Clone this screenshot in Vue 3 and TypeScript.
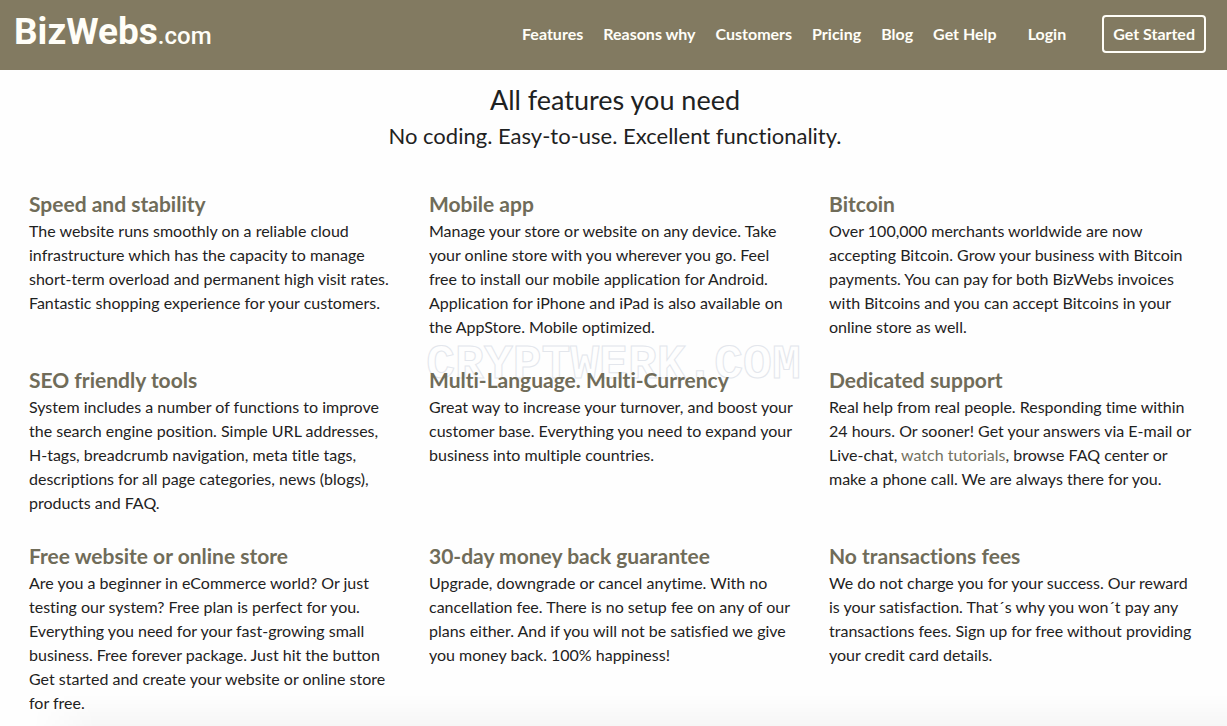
<script setup lang="ts">
interface NavItem {
  label: string
  href: string
}

interface Feature {
  title: string
  text: string
  link?: string
  after?: string
}

const navItems: NavItem[] = [
  { label: 'Features', href: '#features' },
  { label: 'Reasons why', href: '#reasons' },
  { label: 'Customers', href: '#customers' },
  { label: 'Pricing', href: '#pricing' },
  { label: 'Blog', href: '#blog' },
  { label: 'Get Help', href: '#help' },
]

const features: Feature[] = [
  {
    title: 'Speed and stability',
    text: 'The website runs smoothly on a reliable cloud\ninfrastructure which has the capacity to manage\nshort-term overload and permanent high visit rates.\nFantastic shopping experience for your customers.',
  },
  {
    title: 'Mobile app',
    text: 'Manage your store or website on any device. Take\nyour online store with you wherever you go. Feel\nfree to install our mobile application for Android.\nApplication for iPhone and iPad is also available on\nthe AppStore. Mobile optimized.',
  },
  {
    title: 'Bitcoin',
    text: 'Over 100,000 merchants worldwide are now\naccepting Bitcoin. Grow your business with Bitcoin\npayments. You can pay for both BizWebs invoices\nwith Bitcoins and you can accept Bitcoins in your\nonline store as well.',
  },
  {
    title: 'SEO friendly tools',
    text: 'System includes a number of functions to improve\nthe search engine position. Simple URL addresses,\nH-tags, breadcrumb navigation, meta title tags,\ndescriptions for all page categories, news (blogs),\nproducts and FAQ.',
  },
  {
    title: 'Multi-Language. Multi-Currency',
    text: 'Great way to increase your turnover, and boost your\ncustomer base. Everything you need to expand your\nbusiness into multiple countries.',
  },
  {
    title: 'Dedicated support',
    text: 'Real help from real people. Responding time within\n24 hours. Or sooner! Get your answers via E-mail or\nLive-chat, ',
    link: 'watch tutorials',
    after: ', browse FAQ center or\nmake a phone call. We are always there for you.',
  },
  {
    title: 'Free website or online store',
    text: 'Are you a beginner in eCommerce world? Or just\ntesting our system? Free plan is perfect for you.\nEverything you need for your fast-growing small\nbusiness. Free forever package. Just hit the button\nGet started and create your website or online store\nfor free.',
  },
  {
    title: '30-day money back guarantee',
    text: 'Upgrade, downgrade or cancel anytime. With no\ncancellation fee. There is no setup fee on any of our\nplans either. And if you will not be satisfied we give\nyou money back. 100% happiness!',
  },
  {
    title: 'No transactions fees',
    text: 'We do not charge you for your success. Our reward\nis your satisfaction. That´s why you won´t pay any\ntransactions fees. Sign up for free without providing\nyour credit card details.',
  },
]
</script>

<template>
  <div class="page">
    <header class="header">
      <a class="logo" href="#">BizWebs<span class="logo-tld">.com</span></a>
      <nav class="nav">
        <a v-for="item in navItems" :key="item.label" :href="item.href">{{ item.label }}</a>
        <a class="login" href="#login">Login</a>
        <button class="cta" type="button">Get Started</button>
      </nav>
    </header>

    <div class="watermark" aria-hidden="true">CRYPTWERK.COM</div>

    <main class="main">
      <h1>All features you need</h1>
      <p class="subtitle">No coding. Easy-to-use. Excellent functionality.</p>
      <div class="grid">
        <section v-for="f in features" :key="f.title" class="feature">
          <h2>{{ f.title }}</h2>
          <p>{{ f.text }}<a v-if="f.link" href="#tutorials">{{ f.link }}</a>{{ f.after }}</p>
        </section>
      </div>
    </main>

    <div class="shade"></div>
  </div>
</template>

<style>
body {
  margin: 0;
  background: #fefefe;
}
</style>

<style scoped>
.page {
  position: relative;
  min-height: 100vh;
  overflow: hidden;
  box-sizing: border-box;
  font-family: Lato, "Noto Sans", sans-serif;
  font-variant-ligatures: none;
  color: #1e2222;
}

.header {
  display: flex;
  align-items: center;
  justify-content: space-between;
  height: 70px;
  padding: 0 21px 3px 14px;
  box-sizing: border-box;
  background: #827a61;
}

.logo {
  font-family: Roboto, sans-serif;
  font-size: 37px;
  line-height: 48px;
  font-weight: 700;
  color: #fffef8;
  text-decoration: none;
}

.logo-tld {
  font-size: 24px;
  font-weight: 500;
}

.nav {
  display: flex;
  align-items: center;
  gap: 20px;
}

.nav a,
.cta {
  font-size: 16px;
  line-height: 24px;
  font-weight: 700;
  color: #fffef8;
  text-decoration: none;
  white-space: nowrap;
}

.nav .login {
  margin: 0 16px 0 11px;
}

.cta {
  padding: 5px 9px;
  border: 2px solid #fffef8;
  border-radius: 4px;
  background: transparent;
  font-family: inherit;
  cursor: pointer;
}

.main {
  position: relative;
  padding: 14px 12px 10px 15px;
}

h1 {
  margin: 0;
  font-size: 27px;
  line-height: 32px;
  font-weight: 400;
  text-align: center;
}

.subtitle {
  margin: 8px 0 44px;
  font-size: 22px;
  line-height: 24px;
  text-align: center;
}

.grid {
  display: grid;
  grid-template-columns: repeat(3, 1fr);
  row-gap: 29px;
}

.feature {
  padding: 0 14px;
}

h2 {
  margin: 0 0 3px;
  font-size: 21px;
  line-height: 24px;
  font-weight: 700;
  color: #706c59;
}

.feature p {
  margin: 0;
  font-size: 16px;
  line-height: 24px;
  white-space: pre-line;
}

.feature a {
  color: #74715f;
  text-decoration: none;
}

.watermark {
  position: absolute;
  top: 341px;
  left: 0;
  right: 0;
  font-family: "Liberation Mono", monospace;
  font-size: 48px;
  line-height: 48px;
  font-weight: 700;
  text-align: center;
  color: #fefefe;
  -webkit-text-stroke: 1px #e3e6ec;
  pointer-events: none;
}

.shade {
  position: absolute;
  left: 32px;
  right: 0;
  bottom: 0;
  height: 32px;
  background: linear-gradient(to bottom, rgba(0, 0, 0, 0), rgba(0, 0, 0, 0.03));
  mask-image: linear-gradient(to right, transparent, #000 64px);
  pointer-events: none;
}
</style>
